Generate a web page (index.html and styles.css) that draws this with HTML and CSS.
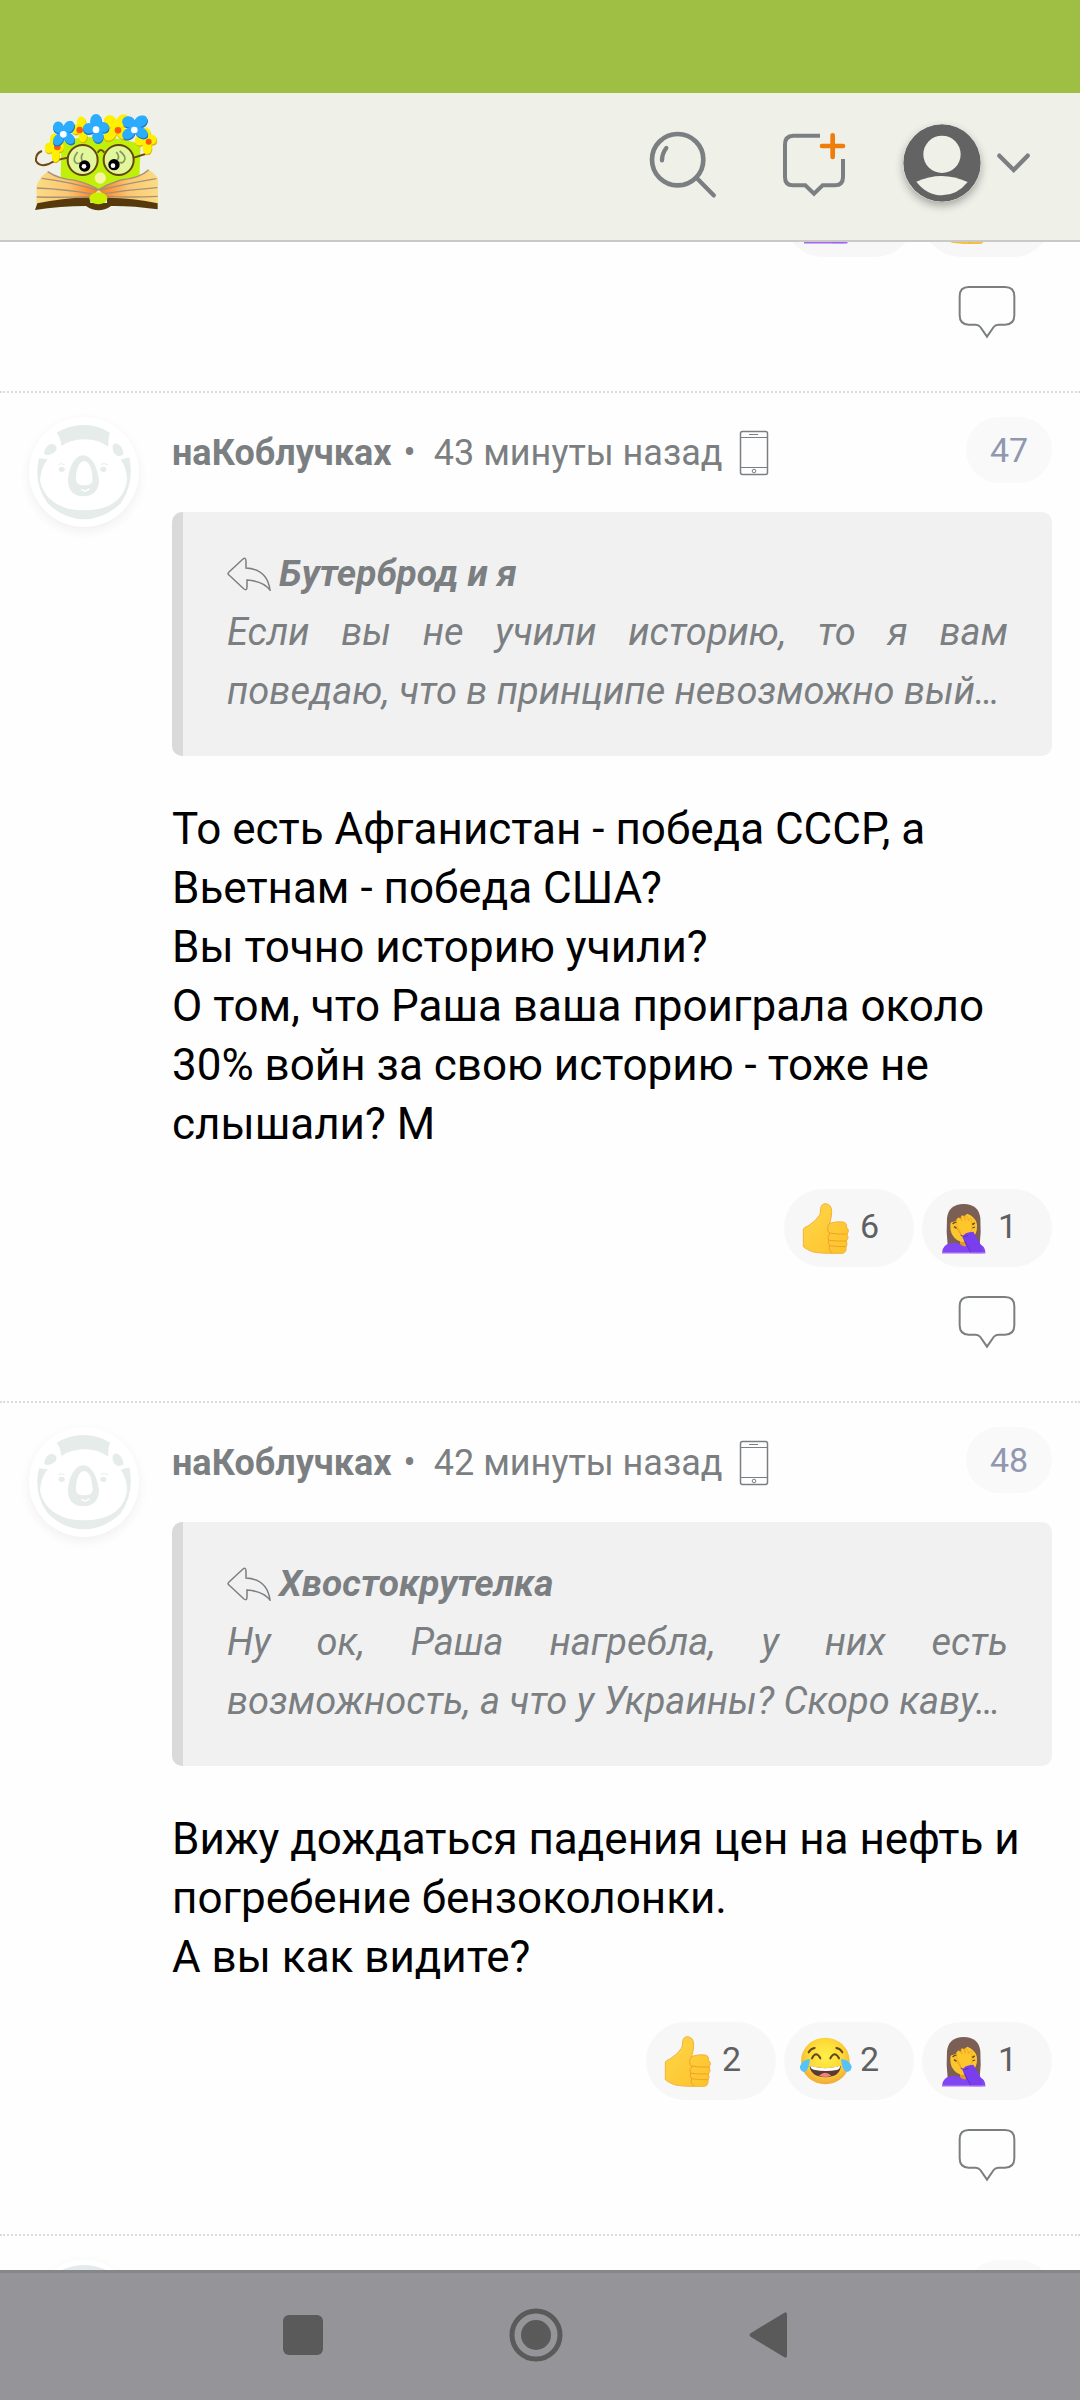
FILE: index.html
```html
<!DOCTYPE html>
<html lang="ru">
<head>
<meta charset="utf-8">
<meta name="viewport" content="width=device-width, initial-scale=1">
<title>Обсуждение</title>
<link rel="stylesheet" href="styles.css">
</head>
<body>
<svg class="sprite" aria-hidden="true">
  <defs>
    <radialGradient id="skin" cx="50%" cy="40%" r="60%"><stop offset="0" stop-color="#fff04a"/><stop offset=".6" stop-color="#fdd835"/><stop offset="1" stop-color="#f0a93a"/></radialGradient>
    <linearGradient id="thumbFill" x1="0" y1="0" x2="1" y2="1"><stop offset="0" stop-color="#ffd64a"/><stop offset="1" stop-color="#fdc229"/></linearGradient>
    <linearGradient id="page" x1="0" y1="0" x2="1" y2="0"><stop offset="0" stop-color="#fbdc85"/><stop offset=".5" stop-color="#fbc671"/><stop offset="1" stop-color="#fb7a1c"/></linearGradient>
    <linearGradient id="pageR" x1="1" y1="0" x2="0" y2="0"><stop offset="0" stop-color="#fbdc85"/><stop offset=".5" stop-color="#fbc671"/><stop offset="1" stop-color="#fb7a1c"/></linearGradient>
  </defs>
  <symbol id="thumb" viewBox="0 0 162 162">
    <path d="M10 84Q12 79 24 75Q48 60 59 42Q62 36 62 22Q64 8 77 8Q95 10 95 32Q95 48 89 67Q112 60 129 63Q142 66 139 78Q150 88 141 99Q149 111 139 120Q144 131 138 137Q140 155 128 157H85Q47 156 34 151Q22 146 12 139Q8 136 10 128Z" fill="url(#thumbFill)" stroke="#f2b23a" stroke-width="3"/>
    <path d="M89 67Q83 74 83 83Q82 93 90 98Q80 106 86 117Q82 126 89 134Q83 148 96 155M88 96Q113 101 141 99M87 118Q112 121 139 120M88 134Q112 138 138 137" fill="none" stroke="#f0a22c" stroke-width="3" stroke-linecap="round"/>
  </symbol>
  <symbol id="facepalm" viewBox="0 0 162 162">
    <path d="M29 132Q24 95 27 52Q31 10 77 9Q123 10 127 52Q130 95 125 132Z" fill="#7b5f55"/>
    <path d="M66 105H90V145H66Z" fill="#e59a18"/>
    <ellipse cx="77" cy="77" rx="40" ry="46" fill="#fcc62e"/>
    <path d="M36 65Q60 60 88 38Q108 45 118 67L123 38L98 18H55L31 38Z" fill="#7b5f55"/>
    <path d="M44 69Q52 60 59 65M48 77l8 5M96 66l9 4 5-5M103 81l8-3" fill="none" stroke="#654819" stroke-width="4"/>
    <path d="M56 55Q60 47 66 52L72 60L69 46Q75 40 79 48L82 58L80 45Q87 40 90 51L91 60Q95 47 101 53L102 75Q104 91 91 97L73 108Q66 87 56 74Z" fill="#fdc62a" stroke="#eda321" stroke-width="2"/>
    <path d="M51 74L72 105" stroke="#d9911b" stroke-width="2"/>
    <path d="M12 157Q12 131 39 127Q53 124 67 130Q77 141 89 133Q121 122 134 135Q142 142 142 157Z" fill="#8245f4"/>
    <path d="M73 108Q81 95 95 94L106 92L132 137V157H105Q91 153 73 108Z" fill="#793eed"/>
    <path d="M68 103Q78 110 91 103M80 119L99 157" fill="none" stroke="#6330c7" stroke-width="3"/>
    <path d="M12 156H142" stroke="#c48bf7" stroke-width="3"/>
  </symbol>
  <symbol id="laugh" viewBox="0 0 162 162">
    <ellipse cx="76" cy="81" rx="73" ry="70" fill="url(#skin)"/>
    <path d="M26 55Q32 44 44 42M109 42Q121 44 127 55M36 73Q48 49 61 73M91 73Q104 49 117 73" fill="none" stroke="#65471c" stroke-width="6" stroke-linecap="round"/>
    <path d="M29 96Q76 109 122 96Q121 128 76 130Q32 128 29 96Z" fill="#5a3b2d"/>
    <path d="M31 96Q76 109 120 96Q121 105 110 108Q76 115 41 107Q31 104 31 96Z" fill="#fff"/>
    <path d="M57 125Q76 108 94 125Q76 133 57 125Z" fill="#f27f86"/>
    <path d="M30 75Q5 78 0 97Q-1 112 13 114Q26 111 30 75ZM123 75Q149 78 155 97Q155 112 141 114Q126 111 123 75Z" fill="#55c3f7"/>
  </symbol>
  <symbol id="bubble" viewBox="654 405 174 162">
    <path d="M686 411H795Q823 411 823 439V496Q823 524 795 524H775Q766 524 761 531L741 560L721 531Q716 524 707 524H686Q659 524 659 496V439Q659 411 686 411Z" fill="none" stroke="#7b7f82" stroke-width="6"/>
  </symbol>
  <symbol id="reply" viewBox="1 0 44 34">
    <path d="M17 2Q20 0 20 4V11Q41 12 44 33Q37 24 21 23V30Q21 34 18 32L3 18Q1 17 3 15Z" fill="none" stroke="#7b7f82" stroke-width="1.5"/>
  </symbol>
  <symbol id="phone" viewBox="0 0 30 46">
    <rect x="1.5" y="1.5" width="27" height="43" rx="2" fill="none" stroke="#7b7f82" stroke-width="1.5"/>
    <path d="M1 7.5H29M1 37.5H29M10 4.5H19" stroke="#7b7f82"/>
    <circle cx="15" cy="41" r="1.8" fill="none" stroke="#7b7f82"/>
  </symbol>
  <symbol id="koala" viewBox="27 50 330 330">
    <g fill="#e5ecea">
      <path d="M110 98Q146 74 192 74Q236 74 270 97Q264 112 265 139Q232 116 192 117Q153 117 124 137Q122 112 110 98Z"/>
      <path d="M72 158Q77 132 97 130Q113 134 109 149Q99 162 83 164Q74 164 72 158ZM278 145Q276 130 289 129Q309 137 311 162Q296 173 285 162Q279 155 278 145Z"/>
      <path d="M57 174L83 177Q62 204 60 240Q73 306 145 325Q192 335 239 325Q310 309 321 242Q322 205 302 178L328 171Q344 250 301 310Q252 356 192 357Q129 356 82 307Q39 249 57 174Z"/>
      <ellipse cx="125" cy="207" rx="9" ry="8"/><ellipse cx="250" cy="207" rx="9" ry="8"/>
      <path d="M115 193Q124 187 133 193M243 192Q252 187 263 193" fill="none" stroke="#e5ecea" stroke-width="3"/>
      <path fill-rule="evenodd" d="M190 165C215 165 231 198 237 238C238 270 219 287 190 288C160 287 143 270 144 238C147 198 166 165 190 165ZM192 182C174 184 167 215 168 237C169 251 178 255 194 255C208 255 218 250 218 236C216 211 211 183 192 182Z"/>
    </g>
    <path d="M184 267Q197 277 208 265" fill="none" stroke="#fff" stroke-width="5"/>
  </symbol>
  <symbol id="flower" viewBox="-36 -38 72 76" preserveAspectRatio="none">
    <ellipse cx="-17" cy="-18" rx="18" ry="17" transform="rotate(35 -17 -18)"/><ellipse cx="17" cy="-20" rx="20" ry="16" transform="rotate(-45 17 -20)"/><ellipse cx="-17" cy="18" rx="20" ry="15" transform="rotate(-45 -17 18)"/><ellipse cx="18" cy="15" rx="20" ry="15" transform="rotate(40 18 15)"/><circle r="15"/>
  </symbol>
  <symbol id="flower-up" viewBox="-36 -38 72 76" preserveAspectRatio="none">
    <ellipse cx="0" cy="-20" rx="16" ry="18"/><ellipse cx="-20" cy="0" rx="16" ry="14"/><ellipse cx="20" cy="-3" rx="16" ry="14"/><ellipse cx="5" cy="20" rx="15" ry="18"/><circle r="15"/>
  </symbol>
</svg>

<div class="screen">
  <div class="status-bar"></div>

  <header class="topbar">
    <a class="logo" href="#" aria-label="Главная">
      <svg width="123" height="97" viewBox="104 98 369 291">
        <path d="M183 180Q297 150 421 188L417 290L297 330L181 300Z" fill="#c0f00a"/>
        <path d="M142 271Q175 294 225 297Q263 306 295 325L268 353Q190 348 108 369Q110 345 108 318Q115 287 142 271Z" fill="url(#page)"/>
        <path d="M445 265Q420 290 361 296Q325 307 295 325L322 353Q390 348 473 368V290Q462 274 445 265Z" fill="url(#pageR)"/>
        <path d="M142 271Q175 294 225 297Q263 306 295 325Q325 307 361 296Q420 290 445 265M124 291Q210 302 290 326M110 320Q201 324 275 338M109 347Q200 349 268 345M468 292Q390 305 300 326M471 319Q390 325 313 337M472 345Q390 349 320 345" fill="none" stroke="#a5917a" stroke-width="4"/>
        <path d="M111 366Q190 348 270 349V365H320V349Q400 350 472 366V384Q394 373 332 374Q295 400 257 374Q180 374 104 386Z" fill="#573a0b"/>
        <ellipse cx="294" cy="351" rx="27" ry="18" fill="#c8f000"/>
        <circle cx="300" cy="290" r="17" fill="#f8f5a0"/>
        <g fill="#e2f69b" stroke="#644610" stroke-width="6"><circle cx="247" cy="236" r="45"/><circle cx="355" cy="236" r="45"/></g>
        <path d="M292 214Q301 198 312 214M203 229Q164 235 145 248Q118 258 107 239Q105 216 125 209M401 229L435 218" fill="none" stroke="#704915" stroke-width="6"/>
        <path d="M232 212Q216 232 225 243Q232 250 241 243M248 216Q239 228 246 239M348 212Q360 227 350 237M358 209Q381 226 371 240Q366 247 357 243" fill="none" stroke="#849760" stroke-width="5"/>
        <g fill="#000"><circle cx="253" cy="254" r="17"/><circle cx="341" cy="250" r="17"/></g>
        <g fill="#fff"><circle cx="251" cy="255" r="7"/><circle cx="338" cy="253" r="7"/></g>
        <g fill="#d7b90b">
          <use href="#flower-up" x="134" y="160" width="58" height="86"/><use href="#flower-up" x="214" y="109" width="62" height="78"/><use href="#flower" x="309" y="103" width="80" height="82"/><use href="#flower-up" x="404" y="142" width="67" height="80"/>
        </g>
        <g fill="#fff000">
          <use href="#flower-up" x="133" y="156" width="58" height="86"/><use href="#flower-up" x="213" y="105" width="60" height="78"/><use href="#flower" x="309" y="99" width="78" height="81"/><use href="#flower-up" x="403" y="138" width="66" height="80"/>
        </g>
        <g fill="#ff5a12"><circle cx="171" cy="197" r="10"/><circle cx="238" cy="146" r="10"/><circle cx="353" cy="147" r="10"/><circle cx="445" cy="181" r="9"/></g>
        <g fill="#1678c5">
          <use href="#flower" x="157" y="122" width="68" height="76"/><use href="#flower-up" x="248" y="102" width="80" height="86"/><use href="#flower" x="366" y="106" width="78" height="74"/>
        </g>
        <g fill="#2bacff">
          <use href="#flower" x="157" y="118" width="66" height="76"/><use href="#flower-up" x="248" y="98" width="78" height="86"/><use href="#flower" x="364" y="102" width="78" height="74"/>
        </g>
        <g fill="#fff"><circle cx="189" cy="159" r="10"/><circle cx="287" cy="145" r="10"/><circle cx="402" cy="146" r="10"/></g>
      </svg>
    </a>
    <nav class="topbar-actions">
      <button class="plain" aria-label="Поиск">
        <svg width="72" height="70" viewBox="88 112 216 210" fill="none" stroke="#7b7f82" stroke-linecap="round">
          <circle cx="174" cy="207" r="77" stroke-width="14"/><path d="M231 262L282 314" stroke-width="13"/><path d="M140 172Q127 189 127 209" stroke-width="13"/>
        </svg>
      </button>
      <button class="plain" aria-label="Новая тема">
        <svg width="72" height="70" viewBox="468 112 216 210" fill="none" stroke-width="12">
          <path d="M600 135H520Q495 136 495 161V260Q495 284 519 284H556L582 309L608 284H644Q669 284 669 259V205" stroke="#7b7f82"/>
          <path d="M638 134V199M606 166H669" stroke="#ee7d0c" stroke-width="14" stroke-linecap="round"/>
        </svg>
      </button>
      <button class="plain profile" aria-label="Профиль">
        <svg class="profile-face" width="78" height="78" viewBox="848 100 234 234">
          <circle cx="965" cy="217" r="116" fill="#636363"/><circle cx="965" cy="191" r="56" fill="#eff0e8"/><path d="M888 273Q965 238 1042 274Q1010 314 965 314Q920 314 888 273Z" fill="#eff0e8"/>
        </svg>
        <svg width="35" height="22" viewBox="1128 184 105 66"><path d="M1138 195L1181 238L1223 195" fill="none" stroke="#7b7f82" stroke-width="13" stroke-linecap="round"/></svg>
      </button>
    </nav>
  </header>

  <main class="feed">
    <article class="tail">
      <div class="reactions">
        <button class="reaction" aria-label="Рука-лицо"><svg class="emoji"><use href="#facepalm"/></svg></button>
        <button class="reaction" aria-label="Нравится"><svg class="emoji"><use href="#thumb"/></svg></button>
      </div>
      <button class="plain answer" aria-label="Ответить"><svg width="58" height="54"><use href="#bubble"/></svg></button>
    </article>

    <article class="comment">
      <div class="avatar"><svg width="110" height="110"><use href="#koala"/></svg></div>
      <div class="content">
        <div class="head">
          <div class="meta"><a class="author" href="#">наКоблучках</a><span>•</span><span class="time">43 минуты назад</span><svg width="30" height="46"><use href="#phone"/></svg></div>
          <a class="number" href="#">47</a>
        </div>
        <blockquote class="quote">
          <div class="quote-author"><svg width="44" height="34"><use href="#reply"/></svg><cite>Бутерброд и я</cite></div>
          <p>Если вы не учили историю, то я вам поведаю,&nbsp;что в принципе невозможно вый…</p>
        </blockquote>
        <p class="text">То есть Афганистан - победа СССР, а Вьетнам - победа США?<br>Вы точно историю учили?<br>О том, что Раша ваша проиграла около 30% войн за свою историю - тоже не слышали? М</p>
        <div class="reactions">
          <button class="reaction"><svg class="emoji"><use href="#thumb"/></svg><span class="count">6</span></button>
          <button class="reaction"><svg class="emoji"><use href="#facepalm"/></svg><span class="count">1</span></button>
        </div>
        <button class="plain answer" aria-label="Ответить"><svg width="58" height="54"><use href="#bubble"/></svg></button>
      </div>
    </article>

    <article class="comment">
      <div class="avatar"><svg width="110" height="110"><use href="#koala"/></svg></div>
      <div class="content">
        <div class="head">
          <div class="meta"><a class="author" href="#">наКоблучках</a><span>•</span><span class="time">42 минуты назад</span><svg width="30" height="46"><use href="#phone"/></svg></div>
          <a class="number" href="#">48</a>
        </div>
        <blockquote class="quote">
          <div class="quote-author"><svg width="44" height="34"><use href="#reply"/></svg><cite>Хвостокрутелка</cite></div>
          <p>Ну ок, Раша нагребла, у них есть возможность,&nbsp;а что у Украины? Скоро каву…</p>
        </blockquote>
        <p class="text">Вижу дождаться падения цен на нефть и погребение бензоколонки.<br>А вы как видите?</p>
        <div class="reactions">
          <button class="reaction"><svg class="emoji"><use href="#thumb"/></svg><span class="count">2</span></button>
          <button class="reaction"><svg class="emoji"><use href="#laugh"/></svg><span class="count">2</span></button>
          <button class="reaction"><svg class="emoji"><use href="#facepalm"/></svg><span class="count">1</span></button>
        </div>
        <button class="plain answer" aria-label="Ответить"><svg width="58" height="54"><use href="#bubble"/></svg></button>
      </div>
    </article>

    <article class="comment">
      <div class="avatar"><svg width="110" height="110"><circle cx="55" cy="55" r="50" fill="#e3ebea"/></svg></div>
      <div class="content"><div class="head"><div class="meta"></div><span class="number"></span></div></div>
    </article>
  </main>

  <nav class="system-bar">
    <button class="plain" aria-label="Недавние"><svg width="54" height="54"><rect x="7" y="7" width="40" height="40" rx="6" fill="#5a5a5a"/></svg></button>
    <button class="plain" aria-label="Домой"><svg width="54" height="54"><circle cx="27" cy="27" r="24" fill="none" stroke="#5a5a5a" stroke-width="5"/><circle cx="27" cy="27" r="15" fill="#5a5a5a"/></svg></button>
    <button class="plain" aria-label="Назад"><svg width="54" height="54"><path d="M9 25L42 5Q45 3 45 7V47Q45 51 42 49L9 29Q6 27 9 25Z" fill="#5a5a5a"/></svg></button>
  </nav>
</div>
</body>
</html>
```
FILE: styles.css
```css
* { box-sizing: border-box; }

body {
  margin: 0;
  background: #fefefe;
  color: #000;
  font-family: Roboto, "Noto Sans", sans-serif;
}

svg { display: block; flex: none; }
.sprite { position: absolute; width: 0; height: 0; }

a { color: inherit; text-decoration: none; }
p { margin: 0; }

button { font: inherit; cursor: pointer; border: 0; }
.plain { display: flex; padding: 0; background: none; }

.screen {
  display: flex;
  flex-direction: column;
  height: 100vh;
}

.status-bar { flex: none; height: 93px; background: #9ebf43; }

.topbar {
  flex: none;
  display: flex;
  align-items: center;
  justify-content: space-between;
  height: 149px;
  padding: 0 49px 8px 35px;
  background: #eff0e8;
  border-bottom: 2px solid #c9c9c6;
}

.topbar-actions { display: flex; align-items: center; gap: 55px; }
.profile { align-items: center; gap: 15px; }
.profile-face { border-radius: 50%; box-shadow: 0 4px 8px rgba(0, 0, 0, .3); }

.feed { flex: 1; min-height: 0; overflow: hidden; }

/* the feed is scrolled past the start of this comment */
.tail { margin-top: -63px; padding: 0 28px 52px; }

.comment {
  display: flex;
  gap: 33px;
  padding: 24px 28px 52px 29px;
  border-top: 2px dotted #dcdcdc;
}

.avatar {
  flex: none;
  width: 110px;
  height: 110px;
  border-radius: 50%;
  background: #fff;
  box-shadow: 0 4px 12px rgba(0, 0, 0, .06);
}

.content { flex: 1; min-width: 0; }

.head { display: flex; justify-content: space-between; height: 66px; }

.meta {
  display: flex;
  align-items: center;
  gap: 12px;
  padding-top: 6px;
  color: #7b7f82;
  font-size: 36px;
}
.author { font-weight: 700; }
.time { padding: 0 4px 0 6px; }

.number {
  min-width: 86px;
  border-radius: 33px;
  background: #f9f9f9;
  color: #9098b0;
  font-size: 34px;
  line-height: 66px;
  text-align: center;
}

.quote {
  margin: 29px 0 44px;
  padding: 32px 44px 35px;
  border-left: 11px solid #dadada;
  border-radius: 10px;
  background: #f1f1f1;
  color: #7b7f82;
  font-size: 38px;
  font-style: italic;
  line-height: 59px;
  text-align: justify;
}
.quote-author { display: flex; align-items: center; gap: 8px; font-size: 37px; font-weight: 700; }

.text { font-size: 44px; line-height: 59px; }

.reactions { display: flex; justify-content: flex-end; gap: 8px; }
.text + .reactions { margin-top: 35px; }

.reaction {
  display: flex;
  align-items: center;
  gap: 6px;
  min-width: 130px;
  height: 78px;
  padding: 0 16px;
  border-radius: 39px;
  background: #f7f7f7;
  color: #5f6062;
  font-size: 34px;
}
.emoji { width: 54px; height: 54px; }
.count { padding-bottom: 4px; }

.answer { margin: 28px 36px 0 auto; }

.system-bar {
  flex: none;
  display: flex;
  align-items: center;
  justify-content: center;
  gap: 179px;
  height: 130px;
  padding: 0 8px 4px 0;
  border-top: 3px solid #87868b;
  background: #959499;
}
```
